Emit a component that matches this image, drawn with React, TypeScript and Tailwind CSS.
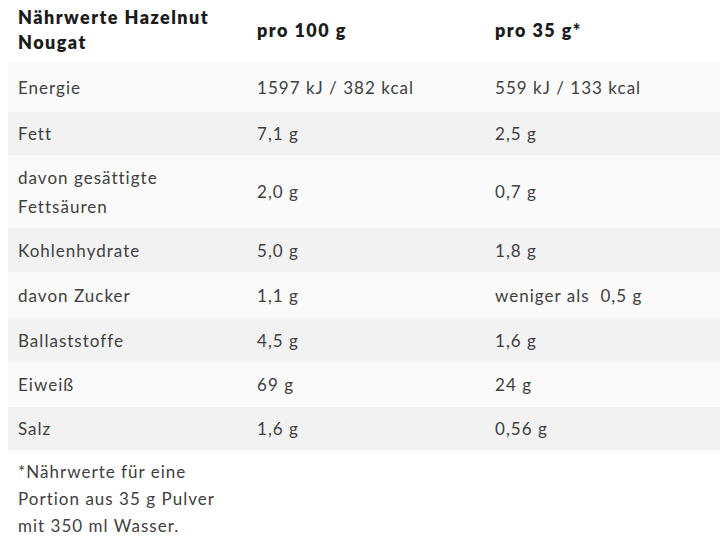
const rows: { label: string[]; per100: string; perServing: string }[] = [
  { label: ["Energie"], per100: "1597 kJ / 382 kcal", perServing: "559 kJ / 133 kcal" },
  { label: ["Fett"], per100: "7,1 g", perServing: "2,5 g" },
  { label: ["davon gesättigte", "Fettsäuren"], per100: "2,0 g", perServing: "0,7 g" },
  { label: ["Kohlenhydrate"], per100: "5,0 g", perServing: "1,8 g" },
  { label: ["davon Zucker"], per100: "1,1 g", perServing: "weniger als\u00a0 0,5 g" },
  { label: ["Ballaststoffe"], per100: "4,5 g", perServing: "1,6 g" },
  { label: ["Eiweiß"], per100: "69 g", perServing: "24 g" },
  { label: ["Salz"], per100: "1,6 g", perServing: "0,56 g" },
]

const rowHeights = ["h-[49px]", "h-[43px]", "h-[73px]", "h-[44px]", "h-[46px]", "h-[44px]", "h-[45px]", "h-[43px]"]

export default function App() {
  return (
    <div className="w-[720px] h-[550px] bg-white pl-2 overflow-hidden font-['Lato',sans-serif] text-[17px] tracking-[0.06em] text-[#404040]">
      {/* header */}
      <div className="grid grid-cols-[239px_238px_1fr] h-[63px] font-extrabold text-[18px] tracking-[0.08em] text-[#1c1c1c] leading-[25px]">
        <div className="pl-[10px] pt-[5px]">
          Nährwerte Hazelnut
          <br />
          Nougat
        </div>
        <div className="pl-[10px] pb-[3px] flex items-center">pro 100 g</div>
        <div className="pl-[10px] pb-[3px] flex items-center">pro 35 g*</div>
      </div>

      {/* rows */}
      {rows.map((row, i) => (
        <div
          key={row.label[0]}
          className={`grid grid-cols-[239px_238px_1fr] items-center leading-[29px] ${rowHeights[i]} ${
            i % 2 === 0 ? "bg-[#fafafa]" : "bg-[#f2f2f2]"
          }`}
        >
          <div className="pl-[10px]">
            {row.label.map((l) => (
              <div key={l}>{l}</div>
            ))}
          </div>
          <div className="pl-[10px]">{row.per100}</div>
          <div className="pl-[10px]">{row.perServing}</div>
        </div>
      ))}

      {/* footnote */}
      <div className="pl-[10px] pt-[8px] leading-[27px]">
        *Nährwerte für eine
        <br />
        Portion aus 35 g Pulver
        <br />
        mit 350 ml Wasser.
      </div>
    </div>
  )
}
